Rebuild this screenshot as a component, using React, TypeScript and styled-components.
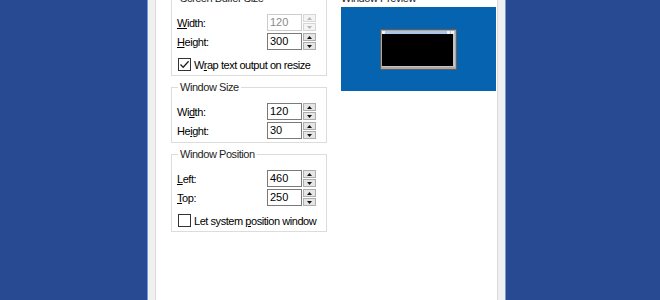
import React from "react";
import styled, { createGlobalStyle } from "styled-components";

const Global = createGlobalStyle`
  *, *::before, *::after { box-sizing: border-box; }
  html, body { margin: 0; padding: 0; }
  body {
    background: #284a93;
    font-family: "Liberation Sans", Arial, sans-serif;
    font-size: 11px;
    letter-spacing: -0.45px;
    white-space: nowrap;
  }
`;

const Desktop = styled.div`
  height: 300px;
  overflow: hidden;
  padding-left: 147px;
  background: #284a93;
`;

const Frame = styled.div`
  width: 359px;
  height: 100%;
  display: flex;
  padding: 0 7px;
  background: #f0f0f0;
  border-left: 1px solid #6f9ad6;
  border-right: 1px solid #6f9ad6;
`;

const Panel = styled.div`
  flex: 1;
  background: #fff;
  border-left: 1px solid #dadada;
  border-right: 1px solid #dadada;
  padding: 0 1px 0 15px;
`;

const Columns = styled.div`
  display: flex;
  gap: 14px;
  align-items: flex-start;
  margin-top: -9px;
`;

const LeftCol = styled.div`
  width: 156px;
  display: flex;
  flex-direction: column;
  gap: 4px;
`;

const RightCol = styled.div`
  width: 155px;
  display: flex;
  flex-direction: column;
`;

const Group = styled.fieldset<{ $bottom?: number }>`
  margin: 0;
  min-width: 0;
  border: 1px solid #dcdcdc;
  padding: 9px 10px ${(p) => p.$bottom ?? 4}px 5px;
`;

const Legend = styled.legend`
  padding: 0 2px;
  margin-left: 1px;
  line-height: 14px;
  color: #1e1e1e;
`;

const Row = styled.div`
  display: flex;
  align-items: center;
  justify-content: space-between;
  height: 17px;
  & + & { margin-top: 2px; }
`;

const Label = styled.span`
  color: #000;
`;

const Mn = styled.span`
  text-decoration: underline;
`;

const Spin = styled.div`
  display: flex;
  height: 17px;
`;

const Edit = styled.div<{ $disabled?: boolean }>`
  width: 35px;
  height: 17px;
  border: 1px solid ${(p) => (p.$disabled ? "#cccccc" : "#7a7a7a")};
  padding-left: 2px;
  line-height: 15px;
  letter-spacing: 0;
  color: ${(p) => (p.$disabled ? "#8a8a8a" : "#000")};
`;

const SpinButtons = styled.div`
  width: 13px;
  margin-left: 1px;
  display: flex;
  flex-direction: column;
  gap: 1px;
`;

const SpinBtn = styled.div<{ $disabled?: boolean }>`
  flex: 1;
  display: flex;
  align-items: center;
  justify-content: center;
  border: 1px solid ${(p) => (p.$disabled ? "#d6d6d6" : "#adadad")};
  background: ${(p) => (p.$disabled ? "#f4f4f4" : "#e5e5e5")};
`;

const CheckRow = styled.label`
  display: flex;
  align-items: center;
  gap: 3px;
  height: 13px;
  margin-top: 8px;
  margin-left: 1px;
  color: #000;
`;

const Box = styled.span`
  flex: none;
  width: 13px;
  height: 13px;
  border: 1px solid #333;
  background: #fff;
  display: flex;
  align-items: center;
  justify-content: center;
`;

const PreviewLabel = styled.div`
  line-height: 14px;
  color: #1e1e1e;
`;

const Preview = styled.div`
  margin-top: 2px;
  height: 84px;
  background: #0563b0;
  display: flex;
  align-items: center;
  justify-content: center;
`;

function Arrow({ up, color }: { up?: boolean; color: string }) {
  return (
    <svg width="5" height="3" viewBox="0 0 5 3">
      <path d={up ? "M0 3 L2.5 0 L5 3 Z" : "M0 0 L5 0 L2.5 3 Z"} fill={color} />
    </svg>
  );
}

function SpinBox({ value, disabled }: { value: string; disabled?: boolean }) {
  const c = disabled ? "#b5b5b5" : "#111";
  return (
    <Spin>
      <Edit $disabled={disabled}>{value}</Edit>
      <SpinButtons>
        <SpinBtn $disabled={disabled}>
          <Arrow up color={c} />
        </SpinBtn>
        <SpinBtn $disabled={disabled}>
          <Arrow color={c} />
        </SpinBtn>
      </SpinButtons>
    </Spin>
  );
}

function Check({ checked, children }: { checked?: boolean; children: React.ReactNode }) {
  return (
    <CheckRow>
      <Box>
        {checked && (
          <svg width="11" height="11" viewBox="0 0 11 11">
            <path d="M1.5 5.5 L4.2 8.3 L9.6 2.2" fill="none" stroke="#222" strokeWidth="1.3" />
          </svg>
        )}
      </Box>
      <span>{children}</span>
    </CheckRow>
  );
}

function MiniWindow() {
  return (
    <svg width="77" height="41" viewBox="0 0 77 41">
      <rect x="0" y="0" width="77" height="41" fill="#5f5f5f" />
      <rect x="1" y="1" width="75" height="39" fill="#a8a8a8" />
      <rect x="2" y="2" width="73" height="3" fill="#a9c6e6" />
      <rect x="2" y="2" width="3" height="3" fill="#f2f2f2" />
      <rect x="67" y="2" width="3" height="3" fill="#f2f2f2" />
      <rect x="71" y="2" width="3" height="3" fill="#f2f2f2" />
      <rect x="2" y="5" width="73" height="33" fill="#c4c4c4" />
      <rect x="2" y="5" width="71" height="32" fill="#000" />
    </svg>
  );
}

export default function App() {
  return (
    <>
      <Global />
      <Desktop>
        <Frame>
          <Panel>
            <Columns>
              <LeftCol>
                <Group $bottom={4}>
                  <Legend>Screen Buffer Size</Legend>
                  <Row>
                    <Label><Mn>W</Mn>idth:</Label>
                    <SpinBox value="120" disabled />
                  </Row>
                  <Row>
                    <Label><Mn>H</Mn>eight:</Label>
                    <SpinBox value="300" />
                  </Row>
                  <Check checked>
                    W<Mn>r</Mn>ap text output on resize
                  </Check>
                </Group>
                <Group $bottom={3}>
                  <Legend>Window Size</Legend>
                  <Row>
                    <Label>Wi<Mn>d</Mn>th:</Label>
                    <SpinBox value="120" />
                  </Row>
                  <Row>
                    <Label>He<Mn>i</Mn>ght:</Label>
                    <SpinBox value="30" />
                  </Row>
                </Group>
                <Group $bottom={4}>
                  <Legend>Window Position</Legend>
                  <Row>
                    <Label><Mn>L</Mn>eft:</Label>
                    <SpinBox value="460" />
                  </Row>
                  <Row>
                    <Label><Mn>T</Mn>op:</Label>
                    <SpinBox value="250" />
                  </Row>
                  <Check>
                    Let system <Mn>p</Mn>osition window
                  </Check>
                </Group>
              </LeftCol>
              <RightCol>
                <PreviewLabel>Window Preview</PreviewLabel>
                <Preview>
                  <MiniWindow />
                </Preview>
              </RightCol>
            </Columns>
          </Panel>
        </Frame>
      </Desktop>
    </>
  );
}
